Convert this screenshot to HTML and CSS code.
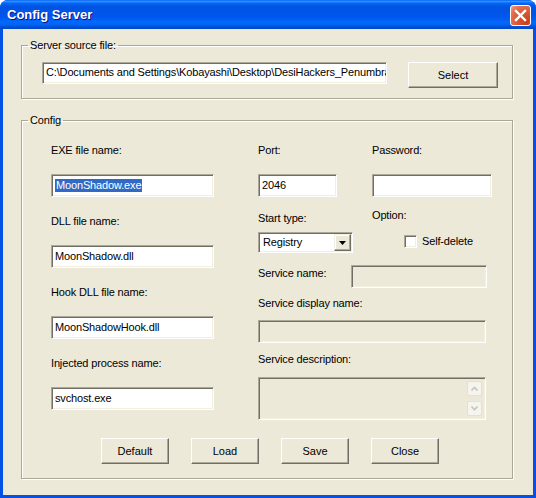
FILE: index.html
```html
<!DOCTYPE html>
<html lang="en">
<head>
  <meta charset="UTF-8" />
  <title>Config Server</title>
  <link rel="stylesheet" href="styles.css">
</head>
<body>
  <div class="window">
    <div class="titlebar">
      <span class="title">Config Server</span>
      <button class="close" aria-label="Close">
        <svg width="19" height="19" viewBox="0 0 19 19">
          <path d="M5 5 L14 14 M14 5 L5 14" stroke="#fff" stroke-width="2.4" stroke-linecap="square" />
        </svg>
      </button>
    </div>

    <div class="client">
      <fieldset class="group source">
        <legend>Server source file:</legend>
        <div class="source-row">
          <div class="edit path">C:\Documents and Settings\Kobayashi\Desktop\DesiHackers_Penumbra</div>
          <button class="btn select">Select</button>
        </div>
      </fieldset>

      <fieldset class="group config">
        <legend>Config</legend>
        <div class="cols">
          <div class="col-left">
            <div class="field">
              <label>EXE file name:</label>
              <div class="edit"><span class="sel">MoonShadow.exe</span></div>
            </div>
            <div class="field">
              <label>DLL file name:</label>
              <div class="edit">MoonShadow.dll</div>
            </div>
            <div class="field">
              <label>Hook DLL file name:</label>
              <div class="edit">MoonShadowHook.dll</div>
            </div>
            <div class="field">
              <label>Injected process name:</label>
              <div class="edit">svchost.exe</div>
            </div>
          </div>

          <div class="col-right">
            <div class="pair">
              <div class="field port">
                <label>Port:</label>
                <div class="edit">2046</div>
              </div>
              <div class="field pass">
                <label>Password:</label>
                <div class="edit"></div>
              </div>
            </div>

            <div class="pair pair-start">
              <div class="field start">
                <label>Start type:</label>
                <div class="combo">
                  <span class="combo-text">Registry</span>
                  <span class="drop">
                    <svg width="7" height="4" viewBox="0 0 7 4"><path d="M0 0 H7 L3.5 4 Z" fill="#000" /></svg>
                  </span>
                </div>
              </div>
              <div class="field option">
                <label>Option:</label>
                <div class="check"><span class="box"></span>Self-delete</div>
              </div>
            </div>

            <div class="svc-row">
              <label>Service name:</label>
              <div class="edit disabled svc-name"></div>
            </div>

            <div class="field display">
              <label>Service display name:</label>
              <div class="edit disabled"></div>
            </div>

            <div class="field desc">
              <label>Service description:</label>
              <div class="edit disabled memo">
                <div class="scroll">
                  <span class="arrow">
                    <svg width="7" height="5" viewBox="0 0 7 5"><path d="M0.5 4.5 L3.5 1.5 L6.5 4.5" fill="none" stroke="#c8c6b6" stroke-width="1.6" /></svg>
                  </span>
                  <span class="arrow">
                    <svg width="7" height="5" viewBox="0 0 7 5"><path d="M0.5 0.5 L3.5 3.5 L6.5 0.5" fill="none" stroke="#c8c6b6" stroke-width="1.6" /></svg>
                  </span>
                </div>
              </div>
            </div>
          </div>
        </div>

        <div class="actions">
          <button class="btn">Default</button>
          <button class="btn">Load</button>
          <button class="btn">Save</button>
          <button class="btn">Close</button>
        </div>
      </fieldset>
    </div>
  </div>
</body>
</html>
```

FILE: styles.css
```css
* {
  box-sizing: border-box;
}

body {
  margin: 0;
  background: #fff;
  font-family: 'Liberation Sans', Arial, sans-serif;
  font-size: 11px;
  letter-spacing: -0.15px;
  color: #000;
}

.window {
  width: 536px;
  height: 498px;
  display: flex;
  flex-direction: column;
  background: #0550e6;
  border-radius: 8px 8px 0 0;
  overflow: hidden;
}

.titlebar {
  height: 29px;
  display: flex;
  align-items: flex-start;
  background: linear-gradient(to bottom, #0058ee 0%, #3593ff 4%, #288eff 6%, #127dff 8%, #036ffc 10%, #0262ee 14%, #0057e5 20%, #0054e3 24%, #0055eb 56%, #005bf5 66%, #026afe 76%, #0062ef 86%, #0052d6 92%, #0046c8 100%);
}

.title {
  margin: 7px 0 0 7px;
  font-weight: bold;
  font-size: 13px;
  line-height: 16px;
  letter-spacing: 0;
  color: #fff;
  text-shadow: 1px 1px #0f1089;
}

.close {
  width: 21px;
  height: 21px;
  margin: 5px 5px 0 auto;
  padding: 0;
  border: 1px solid #fff;
  border-radius: 3px;
  background: radial-gradient(circle at 85% 85%, #c8401a 0%, #d9552f 40%, #e4704f 75%, #f0a48c 100%);
  display: flex;
  align-items: center;
  justify-content: center;
}

.client {
  flex: 1;
  margin: 0 3px 3px;
  padding: 9px 20px 0 18px;
  background: #ece9d8;
}

.group {
  margin: 0;
  border: 1px solid #aca899;
  box-shadow: 1px 1px 0 #fff, inset 1px 1px 0 #fff;
}

.group legend {
  margin-left: -14px;
  padding: 0 2px;
  line-height: 14px;
}

.config legend {
  margin-left: -23px;
}

.source {
  padding: 10px 14px 10px 20px;
}

.source-row {
  display: flex;
  align-items: flex-start;
}

.edit {
  height: 23px;
  padding: 0 3px;
  line-height: 20px;
  white-space: nowrap;
  overflow: hidden;
  background: #fff;
  border: 1px solid;
  border-color: #aca899 #fff #fff #aca899;
  box-shadow: inset 1px 1px 0 #716f64, inset -1px -1px 0 #f1efe2;
}

.edit.disabled {
  background: #ece9d8;
}

.sel {
  display: inline-block;
  padding: 0 1px;
  line-height: 13px;
  background: #316ac5;
  color: #fff;
}

.path {
  width: 345px;
  height: 22px;
  line-height: 19px;
}

.btn {
  width: 68px;
  height: 26px;
  padding: 0;
  font: inherit;
  color: #000;
  background: #ece9d8;
  border: 1px solid;
  border-color: #fff #716f64 #716f64 #fff;
  box-shadow: inset -1px -1px 0 #aca899;
}

.select {
  width: 90px;
  margin-left: 21px;
}

.config {
  margin-top: 14px;
  padding: 17px 20px 14px 29px;
}

.cols {
  display: flex;
  align-items: flex-start;
}

.col-left {
  width: 163px;
  margin-right: 44px;
  display: flex;
  flex-direction: column;
  gap: 18px;
}

.field label {
  display: block;
  line-height: 13px;
}

.field .edit {
  margin-top: 17px;
}

.col-right {
  width: 234px;
}

.pair {
  display: flex;
}

.port,
.start {
  width: 114px;
}

.port .edit {
  width: 79px;
}

.pass,
.option {
  width: 120px;
}

.pair-start {
  margin-top: 12px;
}

.start {
  padding-top: 3px;
}

.combo {
  width: 95px;
  height: 21px;
  margin-top: 7px;
  padding: 1px;
  display: flex;
  background: #fff;
  border: 1px solid;
  border-color: #aca899 #fff #fff #aca899;
  box-shadow: inset 1px 1px 0 #716f64, inset -1px -1px 0 #f1efe2;
}

.combo-text {
  flex: 1;
  padding-left: 3px;
  line-height: 17px;
}

.drop {
  width: 17px;
  height: 17px;
  display: flex;
  align-items: center;
  justify-content: center;
  background: #ece9d8;
  border: 1px solid;
  border-color: #f1efe2 #716f64 #716f64 #f1efe2;
  box-shadow: inset -1px -1px 0 #aca899, inset 1px 1px 0 #fff;
}

.check {
  margin-top: 13px;
  padding-left: 32px;
  display: flex;
  align-items: center;
  line-height: 13px;
}

.box {
  width: 13px;
  height: 13px;
  margin-right: 5px;
  background: #fff;
  border: 1px solid;
  border-color: #aca899 #fff #fff #aca899;
  box-shadow: inset 1px 1px 0 #716f64, inset -1px -1px 0 #f1efe2;
}

.svc-row {
  margin-top: 12px;
  display: flex;
  align-items: flex-start;
}

.svc-row label {
  width: 93px;
  margin-top: 2px;
  line-height: 13px;
}

.svc-name {
  width: 136px;
}

.display {
  margin-top: 9px;
}

.display .edit,
.desc .edit {
  width: 228px;
  margin-top: 10px;
}

.desc {
  margin-top: 10px;
}

.desc .memo {
  height: 43px;
  margin-top: 11px;
  padding: 3px 3px 3px 0;
  display: flex;
  justify-content: flex-end;
}

.scroll {
  width: 15px;
  display: flex;
  flex-direction: column;
  justify-content: space-between;
}

.arrow {
  height: 15px;
  display: flex;
  align-items: center;
  justify-content: center;
  background: #f5f4ef;
  border: 1px solid #e3e1d6;
  border-radius: 2px;
}

.actions {
  margin: 18px 0 0 50px;
  display: flex;
  gap: 22px;
}
```
